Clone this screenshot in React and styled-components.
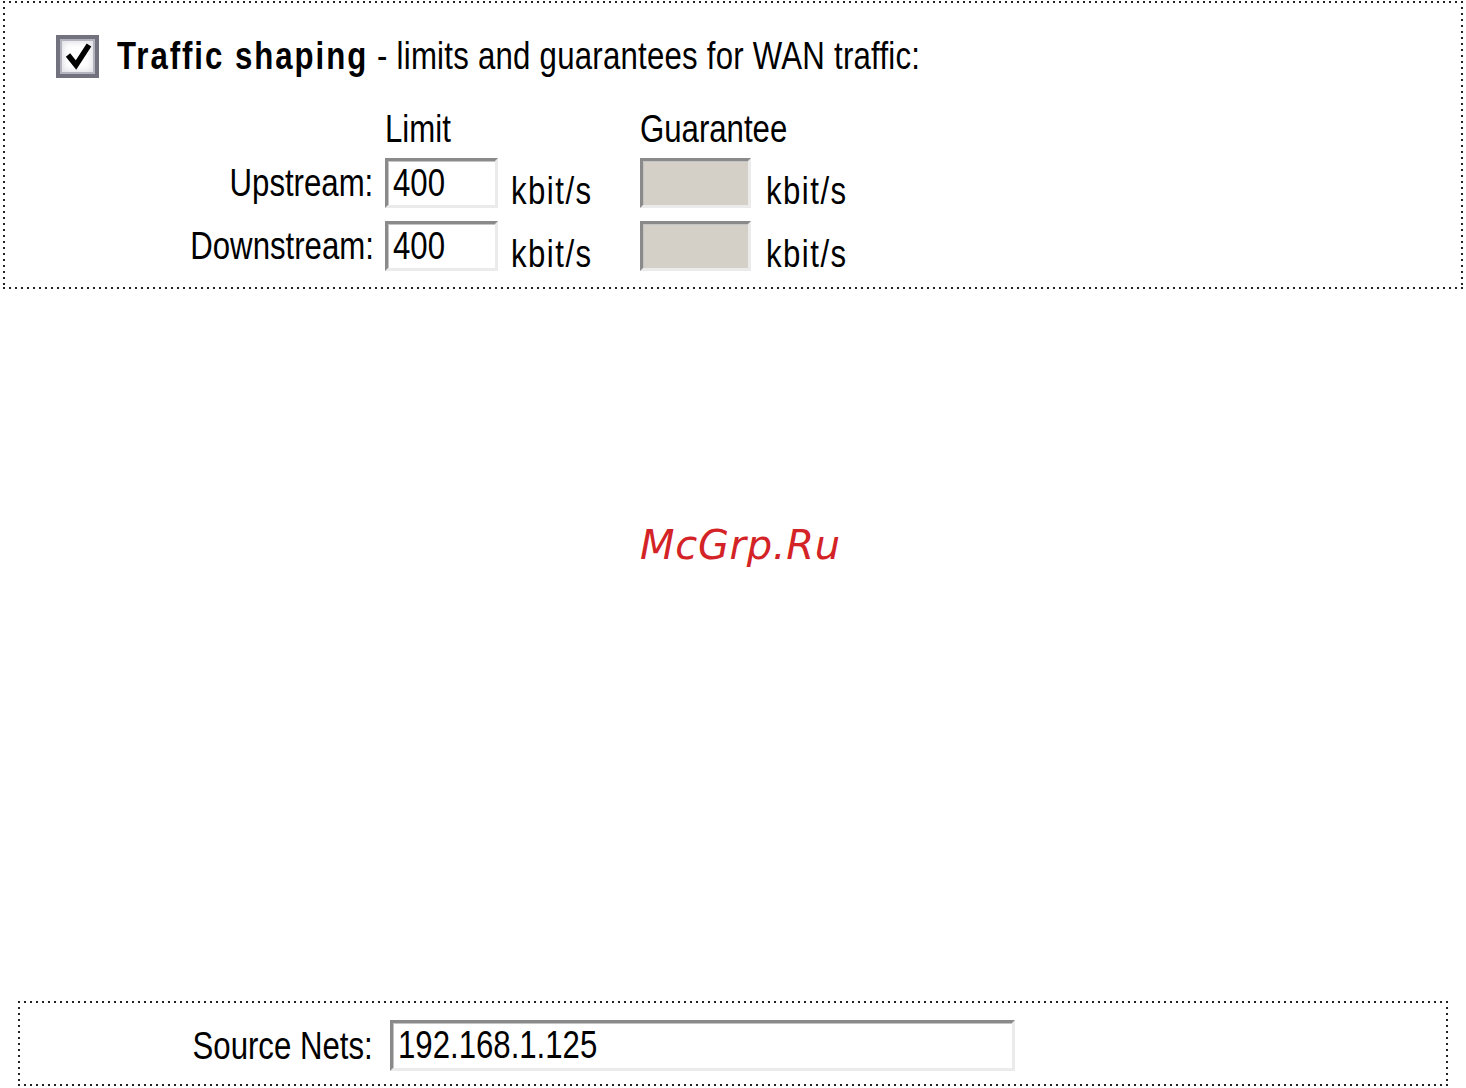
import React from 'react'
import styled, { createGlobalStyle } from 'styled-components'

const GlobalStyle = createGlobalStyle`
  html, body {
    margin: 0;
    padding: 0;
    background: #fff;
  }
  body {
    font-family: "Liberation Sans", Arial, sans-serif;
    color: #000;
  }
`

// dotted frame like the old win32 focus rectangle: 2px dots every 6px
const dottedFrame = `
  background-image:
    linear-gradient(to right, #222 2px, transparent 2px),
    linear-gradient(to right, #222 2px, transparent 2px),
    linear-gradient(to bottom, #222 2px, transparent 2px),
    linear-gradient(to bottom, #222 2px, transparent 2px);
  background-size: 6px 2px, 6px 2px, 2px 6px, 2px 6px;
  background-position: top left, bottom left, top left, top right;
  background-repeat: repeat-x, repeat-x, repeat-y, repeat-y;
`

const Page = styled.div`
  display: flex;
  flex-direction: column;
  height: 1088px;
  box-sizing: border-box;
`

const Panel = styled.section`
  ${dottedFrame}
  box-sizing: border-box;
  margin: ${(p) => p.$margin};
  height: ${(p) => p.$height}px;
`

// the dialog font is a narrow tahoma-like face, squeeze liberation sans to match
const Narrow = styled.span`
  display: inline-block;
  white-space: nowrap;
  letter-spacing: ${(p) => p.$spacing || 0}px;
  transform: scaleX(0.82);
  transform-origin: ${(p) => p.$origin || 'left'} center;
`

const ShapingPanel = styled(Panel)`
  padding: 33px 0 0 53px;
`

const Heading = styled.label`
  display: flex;
  align-items: center;
  gap: 18px;
  font-size: 38px;
  line-height: 44px;
`

const Box = styled.span`
  width: 43px;
  height: 43px;
  flex: none;
  box-sizing: border-box;
  border: 4px solid #72727e;
  box-shadow: inset 0 0 0 2px #b4b4be, inset 0 0 7px 3px #dcdce4;
  background: #fff;
  display: grid;
  place-items: center;
  svg {
    display: block;
  }
`

const Bold = styled.b`
  font-weight: 700;
  letter-spacing: 2.4px;
`

const RateGrid = styled.div`
  display: grid;
  grid-template-columns: 235px 126px 129px 126px auto;
  row-gap: 13px;
  margin: 29px 0 0 94px;
  font-size: 38px;
  line-height: 44px;
`

const ColHead = styled.div`
  grid-column: ${(p) => p.$col};
  margin-bottom: -6px;
`

const RowLabel = styled.div`
  grid-column: 1;
  text-align: right;
  padding-right: 12px;
  align-self: center;
`

const Unit = styled.div`
  box-sizing: border-box;
  height: 50px;
  padding-top: 11px;
`

const Field = styled.div`
  box-sizing: border-box;
  width: ${(p) => p.$width}px;
  height: ${(p) => p.$height || 50}px;
  border: 3px solid;
  border-color: #8a8a8a #ebebeb #ebebeb #8a8a8a;
  box-shadow: inset 1px 1px 0 #c4c4c4;
  background: ${(p) => (p.$disabled ? '#d4d0c8' : '#fff')};
  padding-left: 5px;
  font-size: 38px;
  line-height: 44px;
  white-space: nowrap;
  overflow: hidden;
`

const Middle = styled.div`
  flex: 1;
  padding: 233px 0 0 640px;
`

const Watermark = styled.div`
  font-family: "DejaVu Sans", sans-serif;
  font-style: oblique;
  font-size: 40px;
  color: #d42326;
  letter-spacing: 0.7px;
`

const SourcePanel = styled(Panel)`
  display: grid;
  grid-template-columns: 372px 625px;
  align-items: start;
  padding-top: 19px;
  font-size: 38px;
  line-height: 44px;
`

const SourceLabel = styled.div`
  text-align: right;
  padding: 4px 17px 0 0;
`

const rows = [
  { name: 'Upstream:', limit: '400' },
  { name: 'Downstream:', limit: '400' },
]

const CheckMark = () => (
  <svg width="30" height="30" viewBox="0 0 30 30">
    <path d="M5 14 L13 24 L26 4" fill="none" stroke="#000" strokeWidth="5.5" strokeLinejoin="miter" />
  </svg>
)

export default function App() {
  return (
    <Page>
      <GlobalStyle />
      <ShapingPanel $margin="1px 3px 0 3px" $height={288}>
        <Heading>
          <Box>
            <CheckMark />
          </Box>
          <Narrow $spacing={0.3}>
            <Bold>Traffic shaping</Bold> - limits and guarantees for WAN traffic:
          </Narrow>
        </Heading>
        <RateGrid>
          <ColHead $col={2}>
            <Narrow>Limit</Narrow>
          </ColHead>
          <ColHead $col={4}>
            <Narrow>Guarantee</Narrow>
          </ColHead>
          {rows.map((r) => (
            <React.Fragment key={r.name}>
              <RowLabel>
                <Narrow $origin="right">{r.name}</Narrow>
              </RowLabel>
              <Field $width={113}>
                <Narrow>{r.limit}</Narrow>
              </Field>
              <Unit>
                <Narrow $spacing={1.8}>kbit/s</Narrow>
              </Unit>
              <Field $width={111} $disabled />
              <Unit>
                <Narrow $spacing={1.8}>kbit/s</Narrow>
              </Unit>
            </React.Fragment>
          ))}
        </RateGrid>
      </ShapingPanel>
      <Middle>
        <Watermark>McGrp.Ru</Watermark>
      </Middle>
      <SourcePanel $margin="0 18px 2px 18px" $height={85}>
        <SourceLabel>
          <Narrow $origin="right">Source Nets:</Narrow>
        </SourceLabel>
        <Field $width={625} $height={51}>
          <Narrow>192.168.1.125</Narrow>
        </Field>
      </SourcePanel>
    </Page>
  )
}
